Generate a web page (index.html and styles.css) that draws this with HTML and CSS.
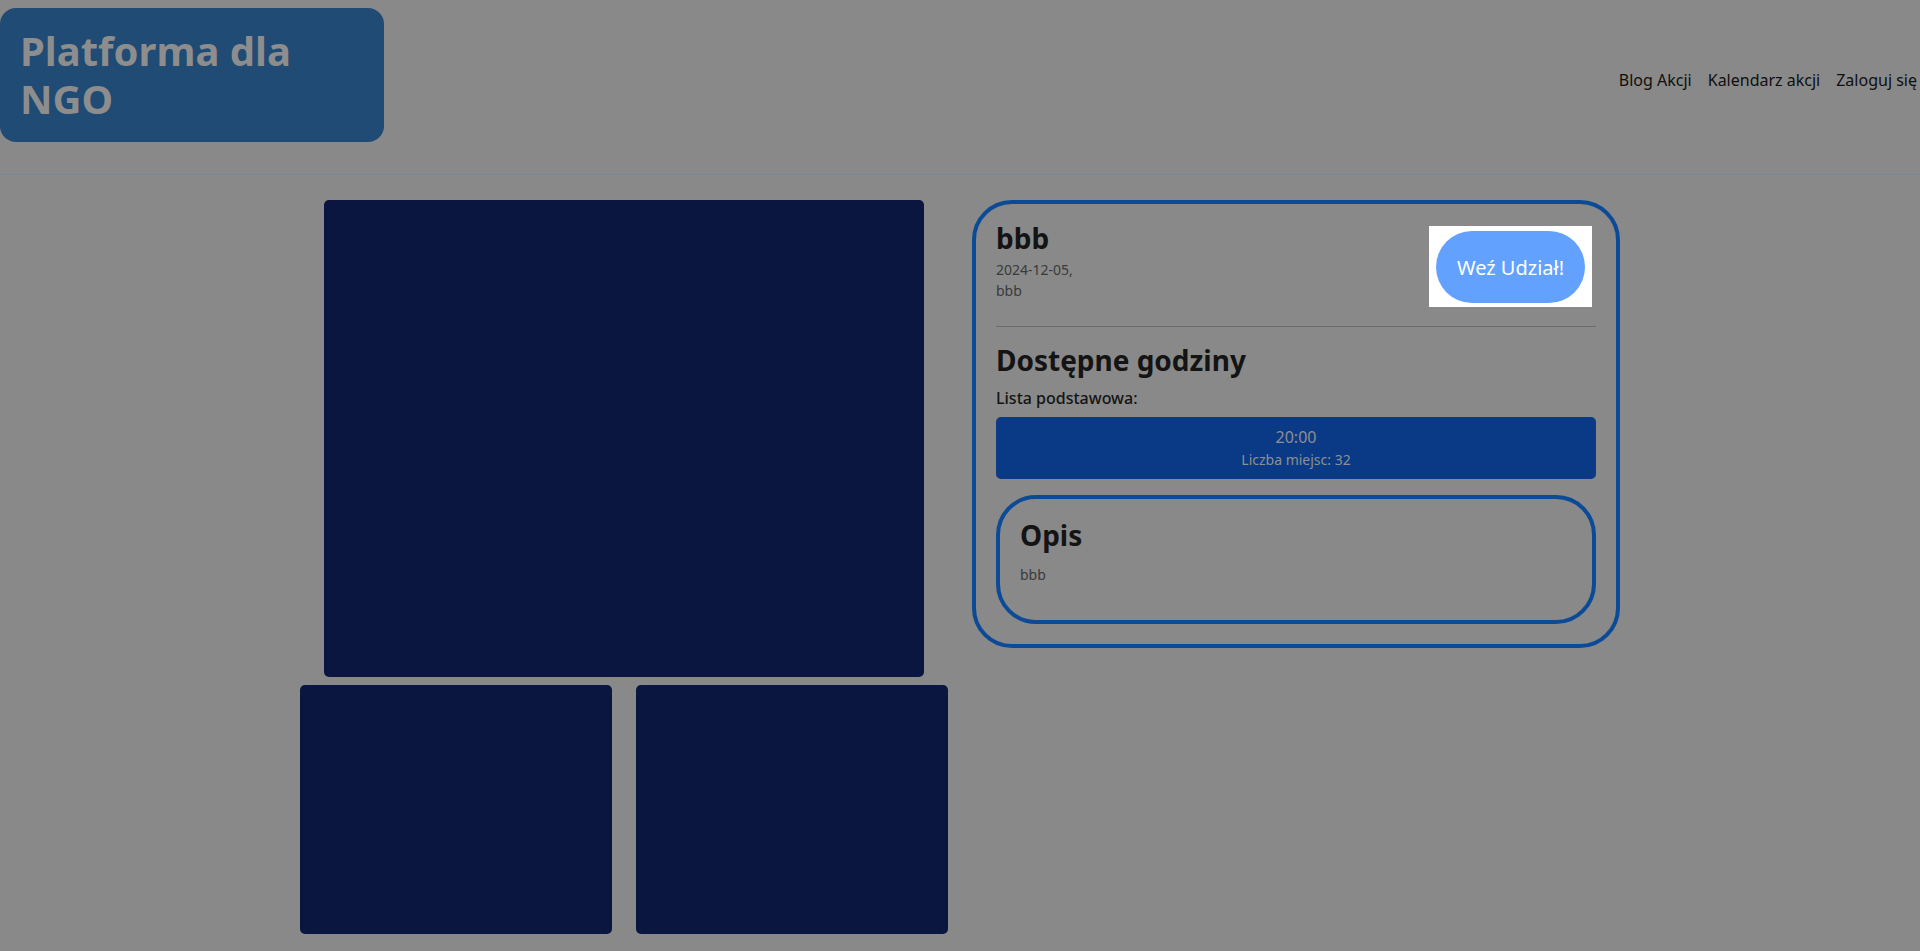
FILE: index.html
```html
<!DOCTYPE html>
<html lang="pl">
<head>
<meta charset="utf-8">
<title>Platforma dla NGO</title>
<link rel="stylesheet" href="styles.css">
</head>
<body>
<header class="site-header">
  <div class="logo">Platforma dla NGO</div>
  <nav class="nav">
    <a class="nav-link" href="#">Blog Akcji</a>
    <a class="nav-link" href="#">Kalendarz akcji</a>
    <a class="nav-link" href="#">Zaloguj się</a>
  </nav>
</header>
<main class="main">
  <section class="gallery">
    <div class="photo photo-main"></div>
    <div class="thumbs">
      <div class="photo photo-thumb"></div>
      <div class="photo photo-thumb"></div>
    </div>
  </section>
  <section class="event-card">
    <div class="event-head">
      <div class="event-info">
        <h2 class="event-title">bbb</h2>
        <p class="event-meta">2024-12-05,<br>bbb</p>
      </div>
      <div class="spotlight">
        <button class="join-btn">Weź Udział!</button>
      </div>
    </div>
    <hr class="divider">
    <h2 class="section-title">Dostępne godziny</h2>
    <p class="list-label">Lista podstawowa:</p>
    <div class="slot">
      <div class="slot-time">20:00</div>
      <div class="slot-seats">Liczba miejsc: 32</div>
    </div>
    <div class="desc-box">
      <h2 class="desc-title">Opis</h2>
      <p class="desc-text">bbb</p>
    </div>
  </section>
</main>
</body>
</html>
```
FILE: styles.css
```css
html {
  overflow: hidden;
}
body {
  margin: 0;
  background: #898989;
  font-family: "Noto Sans", "Open Sans", sans-serif;
  color: #141414;
}
.site-header {
  display: flex;
  align-items: center;
  padding: 8px 0 32px;
  border-bottom: 1px solid #74889a;
}
.logo {
  box-sizing: border-box;
  width: 20%;
  height: 134px;
  padding: 19px 20px;
  background: #1f4b74;
  border-radius: 16px;
  color: #8d8d8d;
  font-size: 40px;
  font-weight: 700;
  line-height: 48px;
}
.nav {
  display: flex;
  gap: 16px;
  margin-left: auto;
  margin-right: 3px;
  padding-top: 9px;
}
.nav-link {
  color: #0f0f0f;
  text-decoration: none;
  font-size: 16px;
  white-space: nowrap;
}
.main {
  width: 1320px;
  margin: 0 auto;
  padding-top: 25px;
  display: grid;
  grid-template-columns: 1fr 1fr;
  gap: 24px;
  align-items: start;
}
.gallery {
  display: flex;
  flex-direction: column;
  gap: 8px;
}
.photo {
  background: #0a1640;
  border-radius: 5px;
}
.photo-main {
  width: 600px;
  height: 477px;
  margin: 0 auto;
}
.thumbs {
  display: grid;
  grid-template-columns: 1fr 1fr;
  gap: 24px;
}
.photo-thumb {
  height: 249px;
}
.event-card {
  border: 4px solid #0b4a96;
  border-radius: 40px;
  padding: 18px 20px 20px;
}
.event-head {
  display: flex;
  justify-content: space-between;
  align-items: flex-start;
}
.event-title,
.section-title,
.desc-title {
  margin: 0;
  font-size: 28px;
  font-weight: 700;
  line-height: 1.2;
  color: #141414;
}
.event-meta {
  margin: 3px 0 0;
  font-size: 14px;
  line-height: 21px;
  color: #3a3a3a;
}
.spotlight {
  margin: 4px 4px 0 0;
  padding: 5px 7px 4px;
  background: #ffffff;
}
.join-btn {
  display: block;
  width: 149px;
  height: 72px;
  border: none;
  border-radius: 36px;
  background: #62a1fd;
  color: #ffffff;
  font-family: "Noto Sans", "Open Sans", sans-serif;
  font-size: 20px;
  padding: 0;
}
.divider {
  margin: 19px 0 0;
  border: none;
  border-top: 1px solid #6d6d6d;
}
.section-title {
  margin-top: 17px;
}
.list-label {
  margin: 8px 0 0;
  font-size: 16px;
  line-height: 24px;
  font-weight: 500;
  color: #141414;
}
.slot {
  margin-top: 7px;
  padding: 8px 0 8px;
  background: #0a3a85;
  border-radius: 5px;
  text-align: center;
  color: #8f8f8f;
}
.slot-time {
  font-size: 16px;
  line-height: 24px;
}
.slot-seats {
  font-size: 14px;
  line-height: 22px;
}
.desc-box {
  margin-top: 16px;
  border: 4px solid #0b4a96;
  border-radius: 40px;
  padding: 20px 20px 35px;
}
.desc-text {
  margin: 12px 0 0;
  font-size: 14px;
  line-height: 21px;
  color: #3a3a3a;
}
```
